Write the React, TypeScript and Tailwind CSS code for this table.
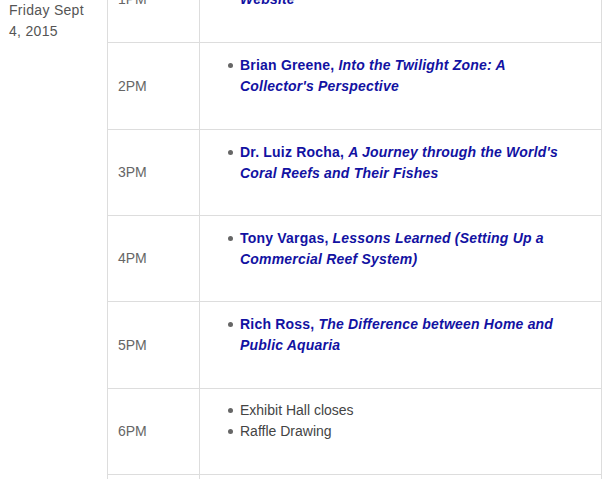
import React from 'react';

type Talk = { who: string; title: string };
type Slot = { time: string; h: string; talks?: Talk[]; items?: string[]; lines?: React.ReactNode };

const slots: Slot[] = [
  { time: '1PM', h: 'h-[87px]', lines: <>Ken Feldman, <i>Building Your Club's</i><br /><i>Website</i></> },
  { time: '2PM', h: 'h-[87px]', talks: [{ who: 'Brian Greene', title: "Into the Twilight Zone: A Collector's Perspective" }] },
  { time: '3PM', h: 'h-[86px]', talks: [{ who: 'Dr. Luiz Rocha', title: "A Journey through the World's Coral Reefs and Their Fishes" }] },
  { time: '4PM', h: 'h-[86px]', talks: [{ who: 'Tony Vargas', title: 'Lessons Learned (Setting Up a Commercial Reef System)' }] },
  { time: '5PM', h: 'h-[87px]', talks: [{ who: 'Rich Ross', title: 'The Difference between Home and Public Aquaria' }] },
  { time: '6PM', h: 'h-[86px]', items: ['Exhibit Hall closes', 'Raffle Drawing'] },
  { time: '', h: 'h-[86px]' },
];

const Bullet = () => <span className="mt-[8px] mr-[7px] w-[5px] h-[5px] shrink-0 rounded-full bg-[#666]" />;

const App: React.FC = () => {
  return (
    <div className="w-[605px] h-[479px] overflow-hidden bg-white flex font-['Liberation_Sans',Arial,sans-serif] text-[14px] leading-[21px]">
      <div className="w-[107px] shrink-0 pl-[9px] pr-[16px] text-[#555] tracking-[0.3px]">Friday Sept 4, 2015</div>
      <div className="w-[495px] shrink-0 border-x border-[#ddd] -mt-[45px] self-start">
        {slots.map((s, i) => (
          <div key={i} className={`flex box-border border-t border-[#ddd] ${s.h}`}>
            <div className="w-[92px] shrink-0 border-r border-[#ddd] pl-[10px] flex items-center text-[#666]">{s.time}</div>
            <div className={`flex-1 pl-[28px] pr-[24px] ${s.items ? 'pt-[11px]' : 'pt-[12px]'}`}>
              {s.lines && (
                <div className="flex"><Bullet /><span className="font-bold text-[#1212a2] tracking-[0.2px] whitespace-nowrap">{s.lines}</span></div>
              )}
              {s.talks?.map((t, j) => (
                <div key={j} className="flex">
                  <Bullet />
                  <span className="font-bold text-[#1212a2] tracking-[0.2px]">{t.who}, <i>{t.title}</i></span>
                </div>
              ))}
              {s.items?.map((it, j) => (
                <div key={j} className="flex">
                  <Bullet />
                  <span className="text-[#444]">{it}</span>
                </div>
              ))}
            </div>
          </div>
        ))}
      </div>
    </div>
  );
};

export default App;
